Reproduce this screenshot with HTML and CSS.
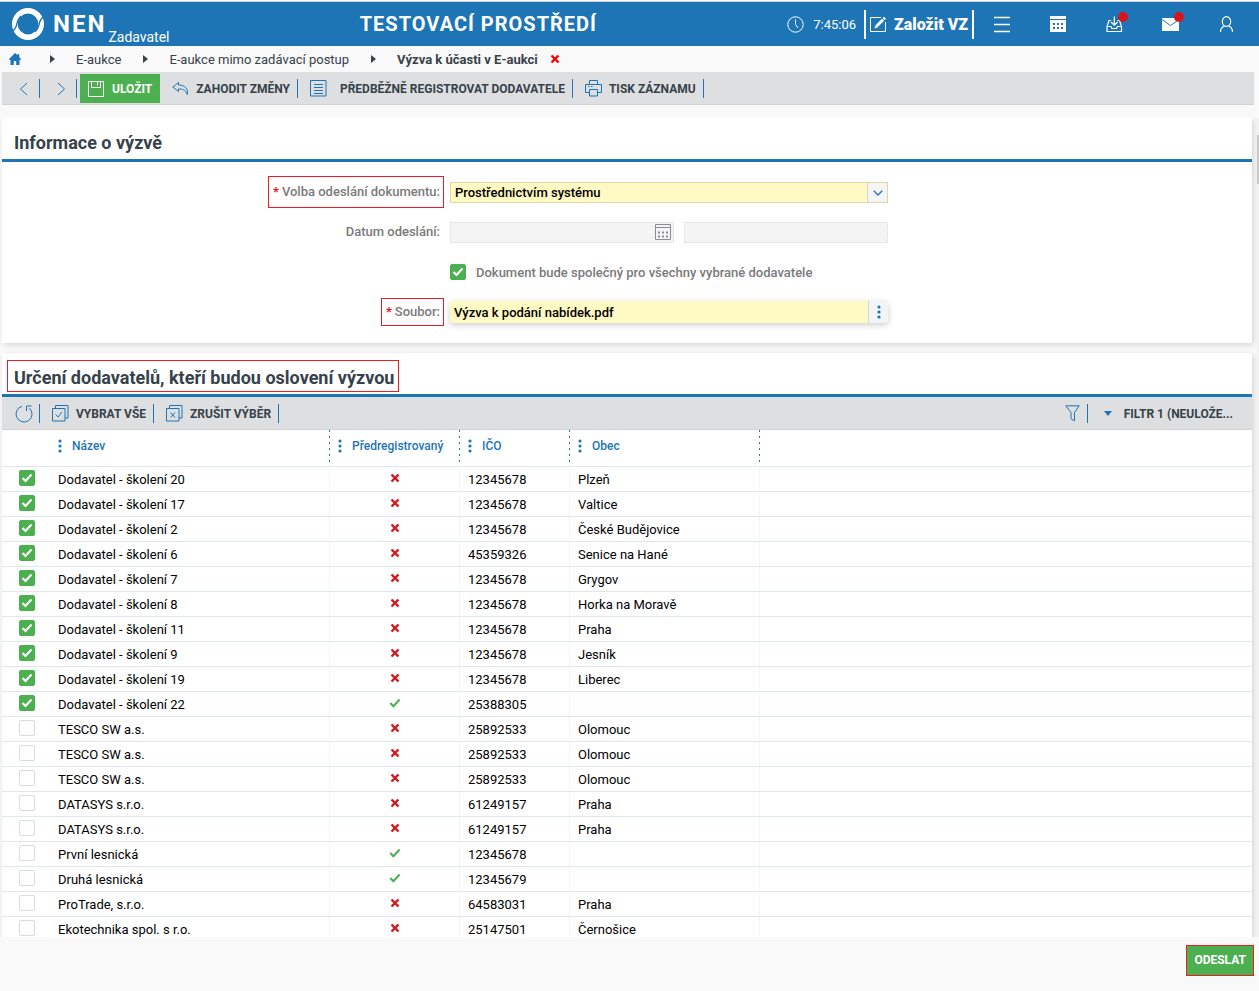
FILE: index.html
```html
<!DOCTYPE html>
<html lang="cs">
<head>
    <meta charset="UTF-8">
    <meta name="viewport" content="width=device-width, initial-scale=1.0">
    <title>NEN - Výzva k účasti v E-aukci</title>
    <link rel="stylesheet" href="styles.css">
</head>

<body>
    <!-- shared icons -->
    <svg class="sprite" aria-hidden="true">
        <symbol id="no" viewBox="0 0 10 10">
            <path d="M1.5 1.5l7 7M8.5 1.5l-7 7" fill="none" stroke="currentColor" stroke-width="2.4"/>
        </symbol>
        <symbol id="yes" viewBox="0 0 12 10">
            <path d="M1.2 5l3.2 3.2L10.6 1.5" fill="none" stroke="currentColor" stroke-width="2"/>
        </symbol>
        <symbol id="dots" viewBox="0 0 4 14">
            <circle cx="2" cy="2" r="1.6" fill="currentColor"/>
            <circle cx="2" cy="7" r="1.6" fill="currentColor"/>
            <circle cx="2" cy="12" r="1.6" fill="currentColor"/>
        </symbol>
    </svg>

    <header class="topbar">
        <a href="#" class="logo">
            <svg width="34" height="34" viewBox="0 0 34 34" aria-hidden="true">
                <circle cx="17" cy="17" r="13.200" fill="none" stroke="#fff" stroke-width="5.600"/>
                <path d="M0 25c4-2 5.500-5 6-9 .5-3 2-5 4-7M34 9c-4 2-5.500 5-6 9-.5 3-2 5-4 7" fill="none" stroke="#1d75b5" stroke-width="1.400"/>
            </svg>
            <span class="logo-name">NEN</span>
            <span class="logo-role">Zadavatel</span>
        </a>
        <div class="env">TESTOVACÍ PROSTŘEDÍ</div>
        <div class="clock">
            <svg width="17" height="17" viewBox="0 0 17 17" fill="none" stroke="#fff" aria-hidden="true"><circle cx="8.500" cy="8.500" r="7.700"/><path d="M8.500 3.500v5l2.500 3.500"/></svg>
            <span>7:45:06</span>
        </div>
        <button type="button" class="create">
            <svg width="17" height="17" viewBox="0 0 17 17" fill="none" stroke="#fff" aria-hidden="true"><path d="M11 1.500H.5v14h15V6"/><path d="M4.500 12.500l1-3.500 2.500 2.500z" fill="#fff" stroke="none"/><path d="M6.800 10L13 3.800" stroke-width="3"/><path d="M13.600 3.200L15 1.800" stroke-width="3"/></svg>
            <span>Založit VZ</span>
        </button>
        <nav class="top-icons">
            <button type="button" aria-label="Menu">
                <svg width="16" height="17" viewBox="0 0 16 17" stroke="#fff" stroke-width="1.300"><path d="M0 1.500h16M0 8.500h16M0 15.500h16"/></svg>
            </button>
            <button type="button" aria-label="Kalendář">
                <svg width="16" height="17" viewBox="0 0 16 17"><path fill="#fff" d="M0 0h16v3H0zM0 4h16v12H0z"/><path fill="#1d75b5" d="M3 7h2v2H3zM7 7h2v2H7zM11 7h2v2h-2zM3 11h2v2H3zM7 11h2v2H7zM11 11h2v2h-2z"/></svg>
            </button>
            <button type="button" aria-label="Doručené">
                <svg width="17" height="17" viewBox="0 0 17 17" fill="none" stroke="#fff" stroke-width="1.200"><path d="M5 4.500H3l-2 6v5h14.500v-5l-2-6h-2M1 10.500h4l1 2h4.500l1-2h4M8.300.5v8.500M5 6l3.300 3.200L11.600 6"/></svg>
                <span class="badge"></span>
            </button>
            <button type="button" aria-label="Zprávy">
                <svg width="17" height="17" viewBox="0 0 17 17"><path fill="#fff" d="M0 2h17v13H0z"/><path d="M0 3.500l8.500 6L17 3.500" fill="none" stroke="#1d75b5"/></svg>
                <span class="badge"></span>
            </button>
            <button type="button" aria-label="Uživatel">
                <svg width="15" height="17" viewBox="0 0 15 17" fill="none" stroke="#fff" stroke-width="1.200"><ellipse cx="7.500" cy="5.500" rx="4.200" ry="4.800"/><path d="M1.500 16c0-3 1.500-5 4-6M13.500 16c0-3-1.500-5-4-6"/></svg>
            </button>
        </nav>
    </header>

    <nav class="breadcrumb">
        <a href="#" class="home" aria-label="Domů">
            <svg width="12" height="12" viewBox="0 0 12 12"><path fill="#1d75b5" d="M6 0l2.500 2.300V1h1.700v3L12 6v.8h-1.500V12H7.200V8H4.800v4H1.500V6.800H0V6z"/></svg>
        </a>
        <span class="arrow"></span>
        <a href="#">E-aukce</a>
        <span class="arrow"></span>
        <a href="#">E-aukce mimo zadávací postup</a>
        <span class="arrow"></span>
        <strong>Výzva k účasti v E-aukci</strong>
        <button type="button" class="close" aria-label="Zavřít"><svg width="10" height="10"><use href="#no"/></svg></button>
    </nav>

    <div class="toolbar page-toolbar">
        <button type="button" class="tool step" aria-label="Předchozí">
            <svg width="9" height="14" viewBox="0 0 9 14"><path d="M8 1L1.500 7 8 13"/></svg>
        </button>
        <button type="button" class="tool step" aria-label="Další">
            <svg width="9" height="14" viewBox="0 0 9 14"><path d="M1 1l6.500 6L1 13"/></svg>
        </button>
        <button type="button" class="save">
            <svg width="16" height="16" viewBox="0 0 16 16" fill="none" stroke="#fff"><path d="M.5.5h15v15H.5zM3.500.5v6h9v-6M9.500 1v3.500"/></svg>
            ULOŽIT
        </button>
        <button type="button" class="tool">
            <svg width="17" height="17" viewBox="0 0 17 17"><path d="M6.500 2.500L.8 7l5.700 4.500V9c4-.3 7 1 8.800 5.500C16.500 9 13 5 6.500 5z"/></svg>
            ZAHODIT ZMĚNY
        </button>
        <button type="button" class="tool wide">
            <svg width="17" height="17" viewBox="0 0 17 17"><path d="M.5.5h15.500v15.500H.5zM4 4.500h9M4 7.500h9M4 10.500h9M4 13.500h9"/></svg>
            PŘEDBĚŽNĚ REGISTROVAT DODAVATELE
        </button>
        <button type="button" class="tool">
            <svg width="17" height="17" viewBox="0 0 17 17"><path d="M4.500 4.500v-4h8v4M4.500 12.500h-4v-8h16v8h-4M4.500 9.500h8v6.500h-8zM3 6.500h1.500M6 6.500h1.500"/></svg>
            TISK ZÁZNAMU
        </button>
    </div>

    <main class="view">
        <div class="content">
            <section class="panel">
                <h2><span>Informace o výzvě</span></h2>
                <form class="form">
                    <label for="volba" class="marked tall"><i>*</i>Volba odeslání dokumentu:</label>
                    <div class="select">
                        <select id="volba"><option>Prostřednictvím systému</option></select>
                        <svg width="10" height="6" viewBox="0 0 10 6" aria-hidden="true"><path d="M.8.8L5 5 9.200.8" fill="none" stroke="#1d75b5" stroke-width="1.300"/></svg>
                    </div>

                    <label for="datum">Datum odeslání:</label>
                    <div class="date">
                        <div class="date-day">
                            <input type="text" id="datum" disabled>
                            <svg width="16" height="16" viewBox="0 0 16 16" fill="none" stroke="#8b8d90" aria-hidden="true"><path d="M.5.5h15v15H.5zM.5 3.500h15"/><path d="M3 8.500h10M3 12.500h10" stroke-width="2" stroke-dasharray="2 2"/></svg>
                        </div>
                        <input type="text" aria-label="Čas odeslání" disabled>
                    </div>

                    <div class="common">
                        <input type="checkbox" id="spolecny" checked>
                        <label for="spolecny">Dokument bude společný pro všechny vybrané dodavatele</label>
                    </div>

                    <label for="soubor" class="marked"><i>*</i>Soubor:</label>
                    <div class="file">
                        <input type="text" id="soubor" value="Výzva k podání nabídek.pdf">
                        <button type="button" aria-label="Možnosti souboru"><svg width="4" height="14"><use href="#dots"/></svg></button>
                    </div>
                </form>
            </section>

            <section class="panel">
                <h2><span class="marked-title">Určení dodavatelů, kteří budou oslovení výzvou</span></h2>
                <div class="toolbar">
                    <button type="button" class="tool refresh" aria-label="Obnovit">
                        <svg width="18" height="18" viewBox="0 0 18 18"><path d="M7 1.300A8 8 0 1 0 14.500 3.200M16.500 1h-5v5"/></svg>
                    </button>
                    <button type="button" class="tool">
                        <svg width="17" height="17" viewBox="0 0 17 17"><path d="M.5 3.500h12.500V16H.5zM3.500 3.500v-3H16v12.500h-3M3.500 9.500L6 12l4-5"/></svg>
                        VYBRAT VŠE
                    </button>
                    <button type="button" class="tool">
                        <svg width="17" height="17" viewBox="0 0 17 17"><path d="M.5 3.500h12.500V16H.5zM3.500 3.500v-3H16v12.500h-3M4.500 7.500l4.500 5M9 7.500l-4.500 5"/></svg>
                        ZRUŠIT VÝBĚR
                    </button>
                    <button type="button" class="tool filter" aria-label="Filtr">
                        <svg width="15" height="17" viewBox="0 0 15 17"><path d="M.8.8h13.400L9.500 7.500v8.300l-3.500-2V7.500z"/></svg>
                    </button>
                    <button type="button" class="filter-name">FILTR 1 (NEULOŽE...</button>
                </div>

                <table class="grid">
                    <colgroup>
                        <col class="c-check"><col class="c-name"><col class="c-reg"><col class="c-ico"><col class="c-city"><col>
                    </colgroup>
                    <thead>
                        <tr>
                            <th></th>
                            <th><svg width="4" height="14"><use href="#dots"/></svg>Název</th>
                            <th><svg width="4" height="14"><use href="#dots"/></svg>Předregistrovaný</th>
                            <th><svg width="4" height="14"><use href="#dots"/></svg>IČO</th>
                            <th><svg width="4" height="14"><use href="#dots"/></svg>Obec</th>
                            <th></th>
                        </tr>
                    </thead>
                    <tbody>
                        <tr><td><input type="checkbox" aria-label="Vybrat" checked></td><td>Dodavatel - školení 20</td><td><svg class="no"><use href="#no"/></svg></td><td>12345678</td><td>Plzeň</td><td></td></tr>
                        <tr><td><input type="checkbox" aria-label="Vybrat" checked></td><td>Dodavatel - školení 17</td><td><svg class="no"><use href="#no"/></svg></td><td>12345678</td><td>Valtice</td><td></td></tr>
                        <tr><td><input type="checkbox" aria-label="Vybrat" checked></td><td>Dodavatel - školení 2</td><td><svg class="no"><use href="#no"/></svg></td><td>12345678</td><td>České Budějovice</td><td></td></tr>
                        <tr><td><input type="checkbox" aria-label="Vybrat" checked></td><td>Dodavatel - školení 6</td><td><svg class="no"><use href="#no"/></svg></td><td>45359326</td><td>Senice na Hané</td><td></td></tr>
                        <tr><td><input type="checkbox" aria-label="Vybrat" checked></td><td>Dodavatel - školení 7</td><td><svg class="no"><use href="#no"/></svg></td><td>12345678</td><td>Grygov</td><td></td></tr>
                        <tr><td><input type="checkbox" aria-label="Vybrat" checked></td><td>Dodavatel - školení 8</td><td><svg class="no"><use href="#no"/></svg></td><td>12345678</td><td>Horka na Moravě</td><td></td></tr>
                        <tr><td><input type="checkbox" aria-label="Vybrat" checked></td><td>Dodavatel - školení 11</td><td><svg class="no"><use href="#no"/></svg></td><td>12345678</td><td>Praha</td><td></td></tr>
                        <tr><td><input type="checkbox" aria-label="Vybrat" checked></td><td>Dodavatel - školení 9</td><td><svg class="no"><use href="#no"/></svg></td><td>12345678</td><td>Jesník</td><td></td></tr>
                        <tr><td><input type="checkbox" aria-label="Vybrat" checked></td><td>Dodavatel - školení 19</td><td><svg class="no"><use href="#no"/></svg></td><td>12345678</td><td>Liberec</td><td></td></tr>
                        <tr><td><input type="checkbox" aria-label="Vybrat" checked></td><td>Dodavatel - školení 22</td><td><svg class="yes"><use href="#yes"/></svg></td><td>25388305</td><td></td><td></td></tr>
                        <tr><td><input type="checkbox" aria-label="Vybrat"></td><td>TESCO SW a.s.</td><td><svg class="no"><use href="#no"/></svg></td><td>25892533</td><td>Olomouc</td><td></td></tr>
                        <tr><td><input type="checkbox" aria-label="Vybrat"></td><td>TESCO SW a.s.</td><td><svg class="no"><use href="#no"/></svg></td><td>25892533</td><td>Olomouc</td><td></td></tr>
                        <tr><td><input type="checkbox" aria-label="Vybrat"></td><td>TESCO SW a.s.</td><td><svg class="no"><use href="#no"/></svg></td><td>25892533</td><td>Olomouc</td><td></td></tr>
                        <tr><td><input type="checkbox" aria-label="Vybrat"></td><td>DATASYS s.r.o.</td><td><svg class="no"><use href="#no"/></svg></td><td>61249157</td><td>Praha</td><td></td></tr>
                        <tr><td><input type="checkbox" aria-label="Vybrat"></td><td>DATASYS s.r.o.</td><td><svg class="no"><use href="#no"/></svg></td><td>61249157</td><td>Praha</td><td></td></tr>
                        <tr><td><input type="checkbox" aria-label="Vybrat"></td><td>První lesnická</td><td><svg class="yes"><use href="#yes"/></svg></td><td>12345678</td><td></td><td></td></tr>
                        <tr><td><input type="checkbox" aria-label="Vybrat"></td><td>Druhá lesnická</td><td><svg class="yes"><use href="#yes"/></svg></td><td>12345679</td><td></td><td></td></tr>
                        <tr><td><input type="checkbox" aria-label="Vybrat"></td><td>ProTrade, s.r.o.</td><td><svg class="no"><use href="#no"/></svg></td><td>64583031</td><td>Praha</td><td></td></tr>
                        <tr><td><input type="checkbox" aria-label="Vybrat"></td><td>Ekotechnika spol. s r.o.</td><td><svg class="no"><use href="#no"/></svg></td><td>25147501</td><td>Černošice</td><td></td></tr>
                    </tbody>
                </table>
            </section>
        </div>
        <div class="scrollbar"><div class="thumb"></div></div>
    </main>

    <footer class="footer">
        <button type="button" class="send">ODESLAT</button>
    </footer>
</body>

</html>
```
FILE: styles.css
```css
* {
    box-sizing: border-box;
}

body {
    display: flex;
    flex-direction: column;
    height: 100vh;
    margin: 0;
    overflow: hidden;
    background: #f9f9f9;
    color: #36424a;
    font-family: Roboto, "Liberation Sans", sans-serif;
    font-size: 13px;
}

button, input, select {
    margin: 0;
    padding: 0;
    border: 0;
    background: none;
    color: inherit;
    font: inherit;
}

button {
    cursor: pointer;
}

a {
    color: inherit;
    text-decoration: none;
}

svg {
    display: block;
    flex: none;
}

.sprite {
    position: absolute;
    width: 0;
    height: 0;
}

/* top bar */
.topbar {
    display: flex;
    align-items: center;
    height: 45px;
    margin-top: 1px;
    padding: 0 5px 0 11px;
    border-top: 1px solid #d0d4d8;
    background: #1d75b5;
    color: #fff;
    flex: none;
}

.logo {
    display: flex;
    align-items: center;
}

.logo-name {
    margin-left: 8px;
    font-size: 24px;
    font-weight: 700;
    letter-spacing: 2px;
}

.logo-role {
    margin-left: 2px;
    padding-top: 26px;
    font-size: 14px;
}

.env {
    flex: 1;
    text-align: center;
    font-size: 20px;
    font-weight: 700;
    letter-spacing: 1px;
}

.clock {
    display: flex;
    align-items: center;
    gap: 9px;
    margin-right: 8px;
}

.create {
    display: flex;
    align-items: center;
    gap: 7px;
    height: 29px;
    padding: 0 4px;
    border: solid #fff;
    border-width: 0 2px;
    font-size: 16px;
    font-weight: 900;
}

.top-icons {
    display: flex;
}

.top-icons button {
    display: flex;
    align-items: center;
    justify-content: center;
    position: relative;
    width: 56px;
    height: 44px;
}

.badge {
    position: absolute;
    top: 10px;
    right: 14px;
    width: 10px;
    height: 10px;
    border-radius: 50%;
    background: #d8151b;
}

/* breadcrumb */
.breadcrumb {
    display: flex;
    align-items: center;
    height: 26px;
    padding-left: 9px;
    flex: none;
}

.arrow {
    margin: 0 21px 0 22px;
    border: 4px solid transparent;
    border-left: 5px solid #36424a;
    border-right: 0;
}

.home + .arrow {
    margin-left: 29px;
}

.breadcrumb strong {
    font-weight: 700;
}

.close {
    margin-left: 12px;
    color: #f00;
}

/* toolbars */
.toolbar {
    display: flex;
    align-items: center;
    height: 33px;
    padding-top: 1px;
    border-bottom: 1px solid #d2d2d2;
    background: #dedfe1;
    font-size: 12px;
    font-weight: 700;
    flex: none;
}

.page-toolbar {
    margin: 0 5px 13px 2px;
}

.tool {
    display: flex;
    align-items: center;
    gap: 7px;
    height: 19px;
    padding: 0 7px 0 12px;
    border-right: 1px solid #1d75b5;
    white-space: nowrap;
}

.tool svg {
    fill: none;
    stroke: #1d75b5;
}

.wide {
    gap: 13px;
}

.step {
    width: 37px;
    padding: 0 0 0 17px;
}

.step:first-child {
    width: 38px;
}

.save {
    display: flex;
    align-items: center;
    gap: 8px;
    height: 29px;
    margin-left: 3px;
    padding: 0 8px;
    background: #4caf50;
    color: #fff;
}

.refresh {
    padding: 0 6px 0 13px;
}

.filter {
    margin-left: auto;
}

.filter-name {
    display: flex;
    align-items: center;
    gap: 12px;
    padding: 0 19px 0 16px;
}

.filter-name::before {
    content: "";
    border: 4px solid transparent;
    border-top: 5px solid #1d75b5;
    border-bottom: 0;
}

/* scrolled area */
.view {
    display: flex;
    flex: 1;
    min-height: 0;
    overflow: hidden;
}

.content {
    flex: 1;
    padding: 0 5px 0 2px;
}

.scrollbar {
    width: 2px;
    background: #f1f1f1;
}

.thumb {
    height: 49px;
    margin-top: 17px;
    background: #c8c8c8;
}

.panel {
    margin-bottom: 10px;
    background: #fff;
    box-shadow: 2px 2px 6px rgba(0, 0, 0, 0.15);
}

.panel h2 {
    display: flex;
    align-items: flex-end;
    height: 44px;
    margin: 0;
    padding-left: 5px;
    border-bottom: 3px solid #1d75b5;
    font-size: 18px;
    font-weight: 700;
}

.panel h2 span {
    margin-bottom: 2px;
    padding: 4px 4px 0 6px;
    border: 1px solid transparent;
    line-height: 26px;
}

.panel h2 .marked-title {
    border-color: #ec1c24;
}

/* form */
.form {
    display: grid;
    grid-template-columns: 442fr 438fr 358fr;
    grid-auto-rows: 32px;
    gap: 8px 6px;
    align-items: center;
    padding: 14px 0 15px;
    color: #7a7a7a;
    font-weight: 500;
}

.form > label {
    grid-column: 1;
    justify-self: end;
    padding: 0 3px 0 4px;
    border: 1px solid transparent;
    line-height: 26px;
}

.form > .marked {
    border-color: #ec1c24;
}

.form > .tall {
    line-height: 30px;
}

.form i {
    margin-right: 3px;
    color: #e01b1b;
    font-style: normal;
    font-weight: 700;
}

.select, .date, .file, .common {
    grid-column: 2;
    display: flex;
}

.select {
    position: relative;
    border: 1px solid #dfd8a4;
    background: #fff9c4;
}

.select select {
    flex: 1;
    height: 19px;
    padding-left: 4px;
    appearance: none;
    color: #000;
    background: linear-gradient(#d4d4d4, #d4d4d4) right 19px top / 1px 100% no-repeat,
        linear-gradient(#f4f4f4, #f4f4f4) right / 19px 100% no-repeat;
}

.select svg {
    position: absolute;
    top: 7px;
    right: 4px;
    pointer-events: none;
}

.date {
    gap: 10px;
}

.date-day {
    display: flex;
    align-items: center;
    width: 224px;
    padding-right: 2px;
    border: 1px dotted #dcdcdc;
    background: #f4f4f4;
}

.date-day input {
    flex: 1;
    min-width: 0;
}

.date > input {
    flex: 1;
    min-width: 0;
    height: 21px;
    border: 1px dotted #dcdcdc;
    background: #f4f4f4;
}

.common {
    align-items: center;
    gap: 10px;
}

.file {
    height: 22px;
    border-radius: 3px;
    background: #fff9c4;
    box-shadow: 0 2px 6px rgba(0, 0, 0, 0.2);
}

.file input {
    flex: 1;
    padding-left: 4px;
    color: #000;
}

.file button {
    display: flex;
    align-items: center;
    justify-content: center;
    width: 20px;
    border-left: 1px solid #d4d4d4;
    border-radius: 0 3px 3px 0;
    background: #f4f4f4;
    color: #1d75b5;
}

input[type="checkbox"] {
    display: block;
    appearance: none;
    width: 16px;
    height: 16px;
    border: 1px solid #dcdcdc;
    border-radius: 2px;
    background: #fff;
}

input[type="checkbox"]:checked {
    border-color: #4caf50;
    background: #4caf50 url("data:image/svg+xml,%3Csvg xmlns='http://www.w3.org/2000/svg' viewBox='0 0 14 14'%3E%3Cpath d='M2.500 7l3 3 6-6.500' fill='none' stroke='white' stroke-width='2.200'/%3E%3C/svg%3E");
}

/* suppliers */
.grid {
    width: 100%;
    table-layout: fixed;
    border-collapse: separate;
    border-spacing: 0;
    color: #000;
}

.c-check {
    width: 48px;
}

.c-name {
    width: 280px;
}

.c-reg {
    width: 130px;
}

.c-ico {
    width: 110px;
}

.c-city {
    width: 190px;
}

.grid th {
    height: 37px;
    padding: 0 0 4px 8px;
    border-bottom: 1px solid #dfe8ec;
    color: #1d75b5;
    font-size: 12px;
    font-weight: 500;
    text-align: left;
    white-space: nowrap;
    background: repeating-linear-gradient(#1d75b5 0 2px, transparent 2px 6px) right / 1px 100% no-repeat;
}

.grid th:first-child, .grid th:last-child {
    background: none;
}

.grid th svg {
    display: inline-block;
    margin-right: 10px;
    vertical-align: middle;
}

.grid td {
    height: 25px;
    padding: 0 8px;
    border-bottom: 1px solid #dfe8ec;
    border-right: 1px dotted #ebebeb;
    white-space: nowrap;
}

.grid td:first-child {
    padding: 0 0 2px 17px;
    border-right: 0;
}

.grid td:nth-child(3) {
    padding: 0 7px 2px 8px;
}

.grid td:last-child {
    border-right: 0;
}

.grid td svg {
    width: 12px;
    height: 10px;
    margin: 0 auto;
}

.no {
    color: #d8151b;
}

.yes {
    color: #4caf50;
}

/* bottom bar */
.footer {
    display: flex;
    justify-content: flex-end;
    height: 54px;
    padding: 8px 5px 0 0;
    flex: none;
}

.send {
    height: 31px;
    padding: 0 7px 2px;
    border: 1px solid #ec1c24;
    background: #4caf50;
    color: #fff;
    font-size: 12px;
    font-weight: 700;
}
```
